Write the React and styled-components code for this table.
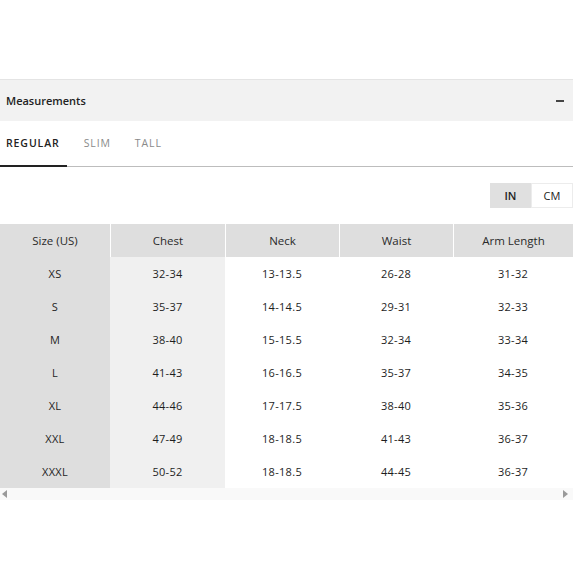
import React, {useState} from 'react';
import styled, {createGlobalStyle} from 'styled-components';

const GlobalStyle = createGlobalStyle`
  body {
    margin: 0;
    background: #fff;
    font-family: "Open Sans", "Liberation Sans", sans-serif;
    color: #222;
  }
`;

const Page = styled.div`
  width: 573px;
  padding-top: 79px;
`;

const AccordionHeader = styled.div`
  display: flex;
  align-items: center;
  justify-content: space-between;
  height: 41px;
  padding: 0 9px 0 6px;
  background: #f2f2f2;
  border-top: 1px solid #e4e4e4;
  font-size: 11px;
  font-weight: 600;
`;

const Minus = styled.span`
  width: 8px;
  height: 2px;
  background: #444;
`;

const Tabs = styled.div`
  display: flex;
  height: 45px;
  border-bottom: 1px solid #bdbdbd;
`;

const Tab = styled.div`
  display: flex;
  align-items: center;
  padding: 0 7px 0 ${p => p.$first ? '6px' : '9px'};
  margin-right: 8px;
  font-size: 10.5px;
  letter-spacing: 0.9px;
  font-weight: ${p => p.$active ? 600 : 400};
  color: ${p => p.$active ? '#222' : '#8a8a8a'};
  border-bottom: 2px solid ${p => p.$active ? '#222' : 'transparent'};
  margin-bottom: -1px;
`;

const UnitRow = styled.div`
  display: flex;
  justify-content: flex-end;
  padding: 16px 0;
`;

const UnitButton = styled.div`
  width: ${p => p.$w}px;
  height: 25px;
  display: flex;
  align-items: center;
  justify-content: center;
  font-size: 11px;
  font-weight: ${p => p.$active ? 600 : 500};
  background: ${p => p.$active ? '#e0e0e0' : '#fff'};
  border: 1px solid ${p => p.$active ? '#e0e0e0' : '#ececec'};
  box-sizing: border-box;
`;

const Table = styled.div`
  display: grid;
  grid-template-columns: 110px 115px 114px 114px 120px;
  font-size: 11px;
  color: #1e1e1e;
`;

const HeadCell = styled.div`
  height: 33px;
  display: flex;
  align-items: center;
  justify-content: center;
  background: #dedede;
  border-left: ${p => p.$first ? 'none' : '1px solid #fff'};
  font-size: 11.5px;
  color: #2a2a2a;
`;

const Cell = styled.div`
  height: 33px;
  display: flex;
  align-items: center;
  justify-content: center;
  background: ${p => p.$tone};
  letter-spacing: 0.3px;
`;

const Scrollbar = styled.div`
  display: flex;
  align-items: center;
  justify-content: space-between;
  height: 12px;
  padding: 0 5px 0 2px;
  background: #f9f9f9;
`;

const Arrow = styled.span`
  width: 0;
  height: 0;
  border-top: 4px solid transparent;
  border-bottom: 4px solid transparent;
  ${p => p.$left ? 'border-right: 5px solid #9a9a9a;' : 'border-left: 5px solid #9a9a9a;'}
`;

const rows = [
  ['XS', '32-34', '13-13.5', '26-28', '31-32'],
  ['S', '35-37', '14-14.5', '29-31', '32-33'],
  ['M', '38-40', '15-15.5', '32-34', '33-34'],
  ['L', '41-43', '16-16.5', '35-37', '34-35'],
  ['XL', '44-46', '17-17.5', '38-40', '35-36'],
  ['XXL', '47-49', '18-18.5', '41-43', '36-37'],
  ['XXXL', '50-52', '18-18.5', '44-45', '36-37'],
];

const tones = ['#dedede', '#f0f0f0', '#fff', '#fff', '#fff'];

export default function App() {
  const [tab, setTab] = useState('REGULAR');
  const [unit, setUnit] = useState('IN');

  return (
    <Page>
      <GlobalStyle />
      <AccordionHeader>
        Measurements
        <Minus />
      </AccordionHeader>

      <Tabs>
        {['REGULAR', 'SLIM', 'TALL'].map((t, i) => (
          <Tab key={t} $first={i === 0} $active={tab === t} onClick={() => setTab(t)}>
            {t}
          </Tab>
        ))}
      </Tabs>

      <UnitRow>
        <UnitButton $w={41} $active={unit === 'IN'} onClick={() => setUnit('IN')}>IN</UnitButton>
        <UnitButton $w={42} $active={unit === 'CM'} onClick={() => setUnit('CM')}>CM</UnitButton>
      </UnitRow>

      <Table>
        {['Size (US)', 'Chest', 'Neck', 'Waist', 'Arm Length'].map((h, i) => (
          <HeadCell key={h} $first={i === 0}>{h}</HeadCell>
        ))}
        {rows.map(r => r.map((v, i) => (
          <Cell key={r[0] + i} $tone={tones[i]}>{v}</Cell>
        )))}
      </Table>

      <Scrollbar>
        <Arrow $left />
        <Arrow />
      </Scrollbar>
    </Page>
  );
}
